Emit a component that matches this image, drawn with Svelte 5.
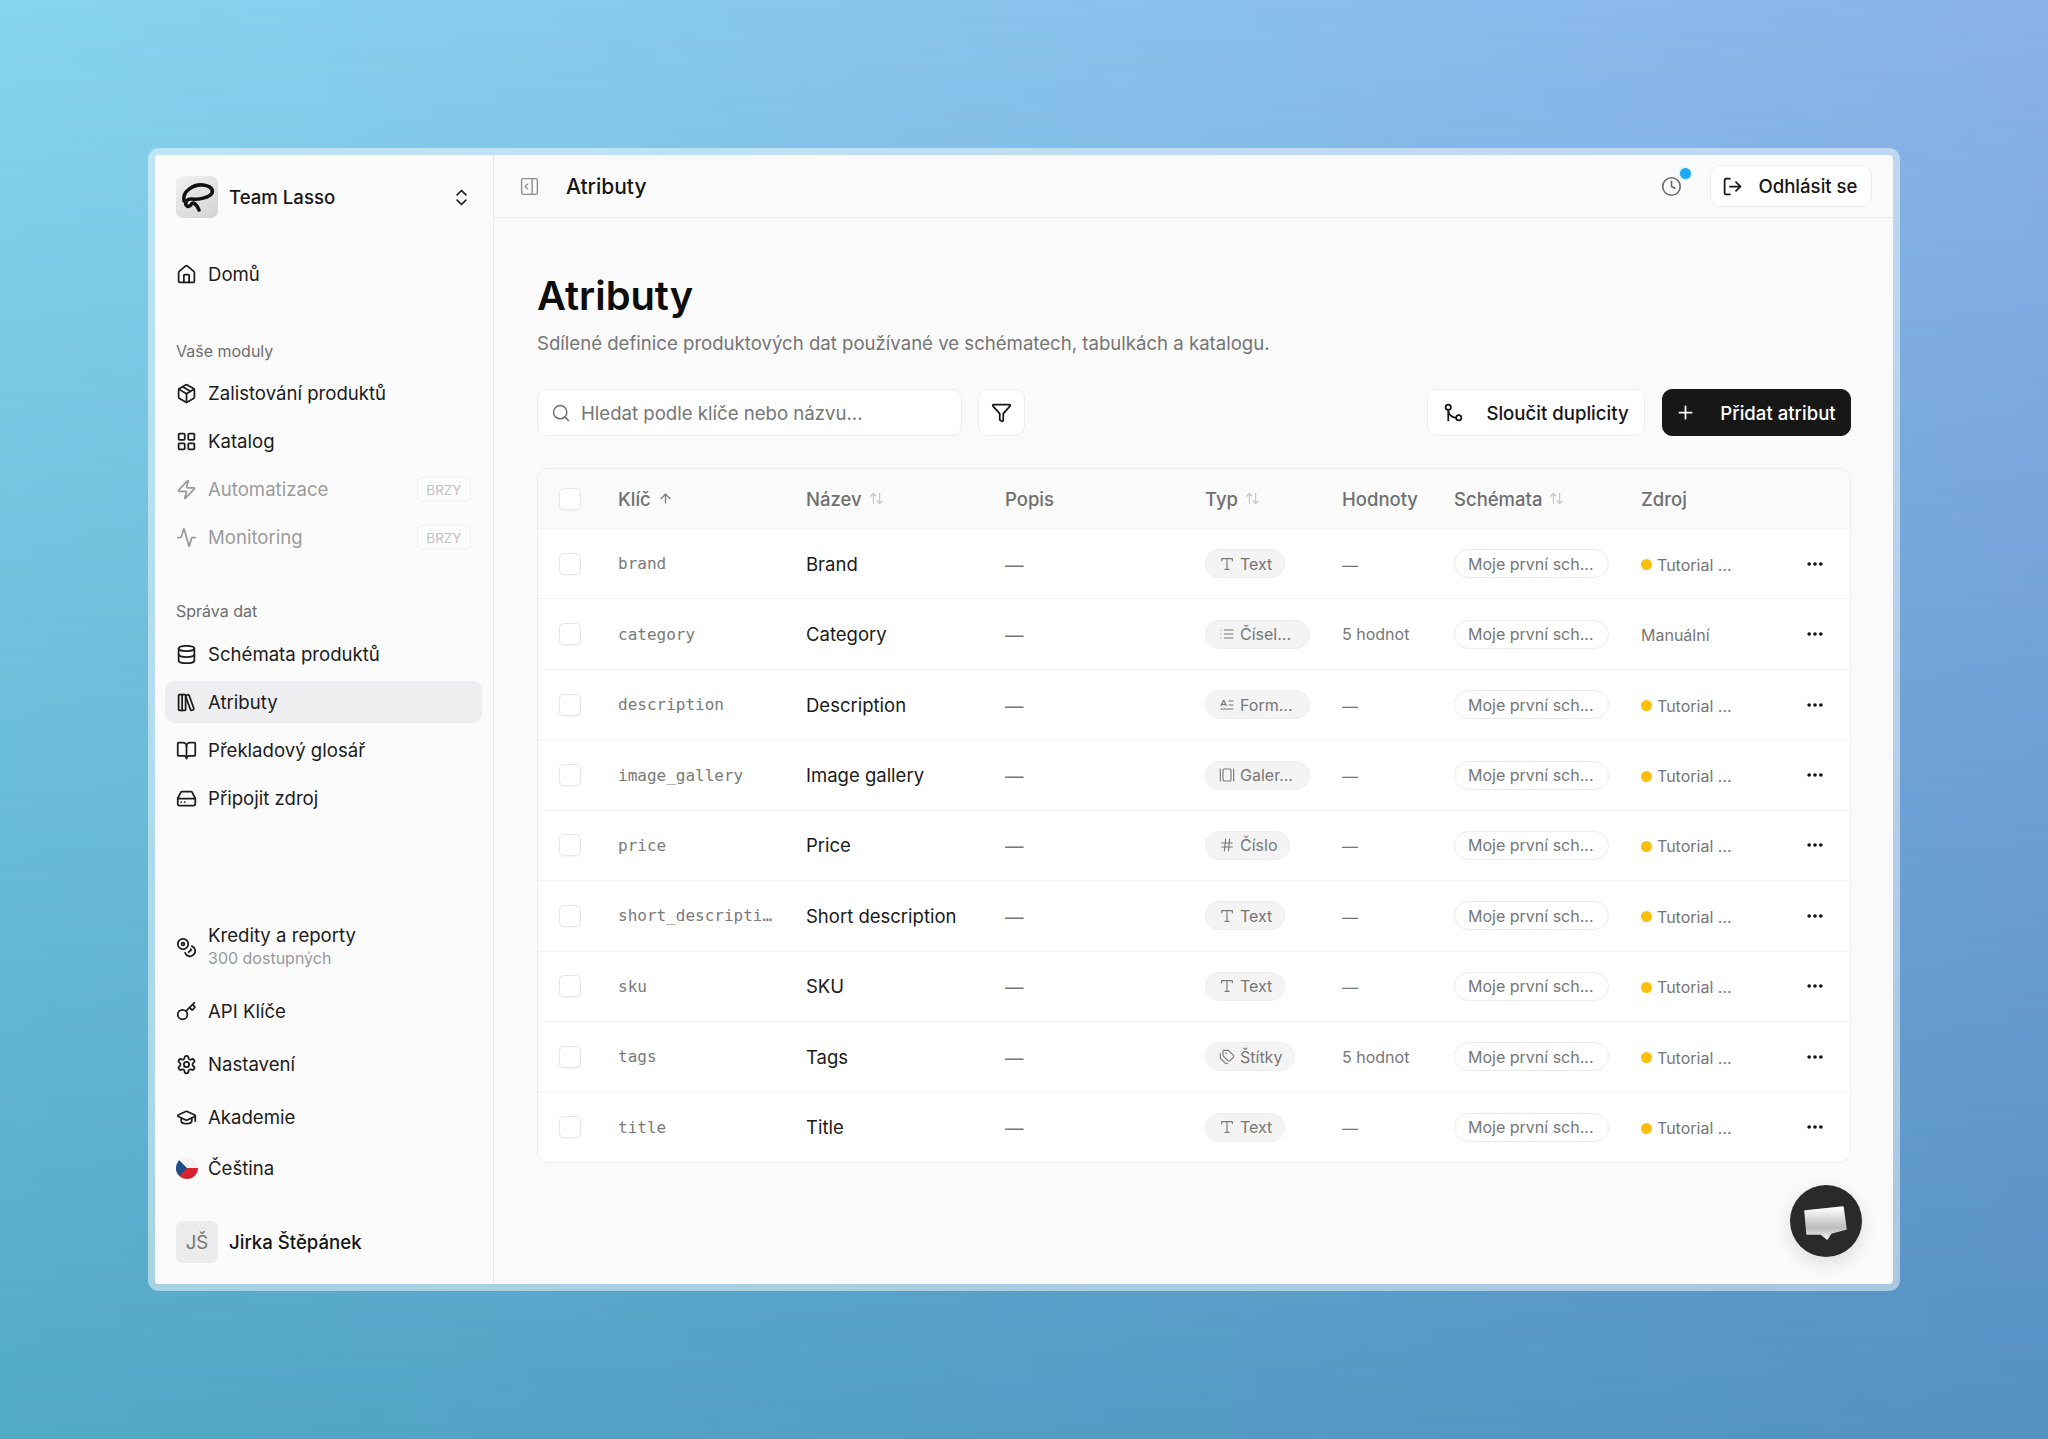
<script lang="ts">
	const icons: Record<string, string> = {
		home: '<path d="M15 21v-8a1 1 0 0 0-1-1h-4a1 1 0 0 0-1 1v8"/><path d="M3 10a2 2 0 0 1 .709-1.528l7-5.999a2 2 0 0 1 2.582 0l7 5.999A2 2 0 0 1 21 10v9a2 2 0 0 1-2 2H5a2 2 0 0 1-2-2z"/>',
		package: '<path d="M11 21.73a2 2 0 0 0 2 0l7-4A2 2 0 0 0 21 16V8a2 2 0 0 0-1-1.73l-7-4a2 2 0 0 0-2 0l-7 4A2 2 0 0 0 3 8v8a2 2 0 0 0 1 1.73z"/><path d="M12 22V12"/><path d="m3.3 7 7.703 4.734a2 2 0 0 0 1.994 0L20.7 7"/><path d="m7.5 4.27 9 5.15"/>',
		grid: '<rect x="3" y="3" width="7" height="7" rx="1"/><rect x="14" y="3" width="7" height="7" rx="1"/><rect x="14" y="14" width="7" height="7" rx="1"/><rect x="3" y="14" width="7" height="7" rx="1"/>',
		zap: '<path d="M4 14a1 1 0 0 1-.78-1.63l9.9-10.2a.5.5 0 0 1 .86.46l-1.92 6.02A1 1 0 0 0 13 10h7a1 1 0 0 1 .78 1.63l-9.9 10.2a.5.5 0 0 1-.86-.46l1.92-6.02A1 1 0 0 0 11 14z"/>',
		activity: '<path d="M22 12h-2.48a2 2 0 0 0-1.93 1.46l-2.35 8.36a.25.25 0 0 1-.48 0L9.24 2.18a.25.25 0 0 0-.48 0l-2.35 8.36A2 2 0 0 1 4.49 12H2"/>',
		database: '<ellipse cx="12" cy="5" rx="9" ry="3"/><path d="M3 5V19A9 3 0 0 0 21 19V5"/><path d="M3 12A9 3 0 0 0 21 12"/>',
		library: '<rect x="3" y="3" width="8" height="18" rx="1"/><path d="M7 3v18"/><path d="M20.4 18.9c.2.5-.1 1.100-.6 1.300l-1.900.7c-.5.2-1.100-.1-1.300-.6L11.100 5.100c-.2-.5.1-1.100.6-1.300l1.900-.7c.5-.2 1.100.1 1.300.6Z"/>',
		book: '<path d="M12 7v14"/><path d="M3 18a1 1 0 0 1-1-1V4a1 1 0 0 1 1-1h5a4 4 0 0 1 4 4 4 4 0 0 1 4-4h5a1 1 0 0 1 1 1v13a1 1 0 0 1-1 1h-6a3 3 0 0 0-3 3 3 3 0 0 0-3-3z"/>',
		drive: '<path d="M22 12H2"/><path d="M5.45 5.11 2 12v6a2 2 0 0 0 2 2h16a2 2 0 0 0 2-2v-6l-3.45-6.89A2 2 0 0 0 16.76 4H7.24a2 2 0 0 0-1.79 1.11z"/><path d="M6 16h.01"/><path d="M10 16h.01"/>',
		coins: '<circle cx="8" cy="8" r="6"/><circle cx="8" cy="8" r="1.6"/><path d="M18.09 10.37A6 6 0 1 1 10.34 18"/><path d="m16.71 13.88.7.71-2.82 2.82"/>',
		key: '<path d="m15.5 7.5 2.3 2.3a1 1 0 0 0 1.4 0l2.1-2.1a1 1 0 0 0 0-1.4L19 4"/><path d="m21 2-9.6 9.6"/><circle cx="7.5" cy="15.5" r="5.5"/>',
		settings: '<path d="M12.22 2h-.44a2 2 0 0 0-2 2v.18a2 2 0 0 1-1 1.73l-.43.25a2 2 0 0 1-2 0l-.15-.08a2 2 0 0 0-2.73.73l-.22.38a2 2 0 0 0 .73 2.73l.15.1a2 2 0 0 1 1 1.72v.51a2 2 0 0 1-1 1.74l-.15.09a2 2 0 0 0-.73 2.73l.22.38a2 2 0 0 0 2.73.73l.15-.08a2 2 0 0 1 2 0l.43.25a2 2 0 0 1 1 1.73V20a2 2 0 0 0 2 2h.44a2 2 0 0 0 2-2v-.18a2 2 0 0 1 1-1.73l.43-.25a2 2 0 0 1 2 0l.15.08a2 2 0 0 0 2.73-.73l.22-.39a2 2 0 0 0-.73-2.73l-.15-.08a2 2 0 0 1-1-1.74v-.5a2 2 0 0 1 1-1.74l.15-.09a2 2 0 0 0 .73-2.73l-.22-.38a2 2 0 0 0-2.73-.73l-.15.08a2 2 0 0 1-2 0l-.43-.25a2 2 0 0 1-1-1.73V4a2 2 0 0 0-2-2z"/><circle cx="12" cy="12" r="3"/>',
		cap: '<path d="M21.42 10.922a1 1 0 0 0-.019-1.838L12.83 5.18a2 2 0 0 0-1.66 0L2.6 9.08a1 1 0 0 0 0 1.832l8.57 3.908a2 2 0 0 0 1.66 0z"/><path d="M22 10v6"/><path d="M6 12.5V16a6 3 0 0 0 12 0v-3.5"/>',
		updown: '<path d="m7 15 5 5 5-5"/><path d="m7 9 5-5 5 5"/>',
		panel: '<rect x="3" y="3" width="18" height="18" rx="2"/><path d="M15 3v18"/><path d="m10 15-3-3 3-3"/>',
		clock: '<circle cx="12" cy="12" r="10"/><path d="M12 6v6l4 2"/>',
		logout: '<path d="M9 21H5a2 2 0 0 1-2-2V5a2 2 0 0 1 2-2h4"/><path d="m16 17 5-5-5-5"/><path d="M21 12H9"/>',
		search: '<path d="m21 21-4.34-4.34"/><circle cx="11" cy="11" r="8"/>',
		filter: '<path d="M10 20a1 1 0 0 0 .553.895l2 1A1 1 0 0 0 14 21v-7a2 2 0 0 1 .517-1.341L21.74 4.67A1 1 0 0 0 21 3H3a1 1 0 0 0-.742 1.67l7.225 7.989A2 2 0 0 1 10 14z"/>',
		merge: '<circle cx="18" cy="18" r="3"/><circle cx="6" cy="6" r="3"/><path d="M6 21V9a9 9 0 0 0 9 9"/>',
		plus: '<path d="M5 12h14"/><path d="M12 5v14"/>',
		up: '<path d="m5 12 7-7 7 7"/><path d="M12 19V5"/>',
		sort: '<path d="m21 16-4 4-4-4"/><path d="M17 20V4"/><path d="m3 8 4-4 4 4"/><path d="M7 4v16"/>',
		type: '<path d="M12 4v16"/><path d="M4 7V4h16v3"/><path d="M9 20h6"/>',
		list: '<path d="M3 12h.01"/><path d="M3 18h.01"/><path d="M3 6h.01"/><path d="M8 12h13"/><path d="M8 18h13"/><path d="M8 6h13"/>',
		form: '<path d="M15 12h6"/><path d="M15 6h6"/><path d="m3 13 3.553-7.724a.5.5 0 0 1 .894 0L11 13"/><path d="M3 18h18"/><path d="M3.92 11h6.16"/>',
		gallery: '<path d="M2 3v18"/><rect x="6" y="3" width="12" height="18" rx="2"/><path d="M22 3v18"/>',
		hash: '<path d="M4 9h16"/><path d="M4 15h16"/><path d="M10 3 8 21"/><path d="M16 3l-2 18"/>',
		tags: '<path d="M13.172 2a2 2 0 0 1 1.414.586l6.71 6.71a2.4 2.4 0 0 1 0 3.408l-4.592 4.592a2.4 2.4 0 0 1-3.408 0l-6.71-6.71A2 2 0 0 1 6 9.172V3a1 1 0 0 1 1-1z"/><path d="M2 7v6.172a2 2 0 0 0 .586 1.414l6.71 6.71a2.4 2.4 0 0 0 3.18.182"/><circle cx="10.5" cy="6.5" r=".5"/>'
	};

	const modules = [
		{ icon: 'package', label: 'Zalistování produktů' },
		{ icon: 'grid', label: 'Katalog' },
		{ icon: 'zap', label: 'Automatizace', soon: true },
		{ icon: 'activity', label: 'Monitoring', soon: true }
	];

	const dataItems = [
		{ icon: 'database', label: 'Schémata produktů' },
		{ icon: 'library', label: 'Atributy', active: true },
		{ icon: 'book', label: 'Překladový glosář' },
		{ icon: 'drive', label: 'Připojit zdroj' }
	];

	const columns = [
		{ label: 'Klíč', sort: 'up' },
		{ label: 'Název', sort: 'sort' },
		{ label: 'Popis' },
		{ label: 'Typ', sort: 'sort' },
		{ label: 'Hodnoty' },
		{ label: 'Schémata', sort: 'sort' },
		{ label: 'Zdroj' }
	];

	const rows = [
		{ key: 'brand', name: 'Brand', icon: 'type', type: 'Text', values: '—', source: 'Tutorial ...', dot: true },
		{ key: 'category', name: 'Category', icon: 'list', type: 'Čísel...', values: '5 hodnot', source: 'Manuální', dot: false },
		{ key: 'description', name: 'Description', icon: 'form', type: 'Form...', values: '—', source: 'Tutorial ...', dot: true },
		{ key: 'image_gallery', name: 'Image gallery', icon: 'gallery', type: 'Galer...', values: '—', source: 'Tutorial ...', dot: true },
		{ key: 'price', name: 'Price', icon: 'hash', type: 'Číslo', values: '—', source: 'Tutorial ...', dot: true },
		{ key: 'short_description', name: 'Short description', icon: 'type', type: 'Text', values: '—', source: 'Tutorial ...', dot: true },
		{ key: 'sku', name: 'SKU', icon: 'type', type: 'Text', values: '—', source: 'Tutorial ...', dot: true },
		{ key: 'tags', name: 'Tags', icon: 'tags', type: 'Štítky', values: '5 hodnot', source: 'Tutorial ...', dot: true },
		{ key: 'title', name: 'Title', icon: 'type', type: 'Text', values: '—', source: 'Tutorial ...', dot: true }
	];
</script>

{#snippet icon(name: string, size = 21, stroke = 2)}
	<svg
		class="icon"
		width={size}
		height={size}
		viewBox="0 0 24 24"
		fill="none"
		stroke="currentColor"
		stroke-width={stroke}
		stroke-linecap="round"
		stroke-linejoin="round">{@html icons[name]}</svg
	>
{/snippet}

{#snippet navItem(item: { icon: string; label: string; active?: boolean; soon?: boolean })}
	<div class="nav-item" class:active={item.active} class:disabled={item.soon}>
		{@render icon(item.icon)}
		<span>{item.label}</span>
		{#if item.soon}
			<span class="soon">BRZY</span>
		{/if}
	</div>
{/snippet}

<div class="page">
	<div class="frame">
		<div class="window">
			<aside class="sidebar">
				<div class="team">
					<div class="logo">
						<svg width="42" height="42" viewBox="0 0 42 42" fill="none" stroke="#111" stroke-width="3.600" stroke-linecap="round">
							<path d="M8 25C6 15 18 8 27 9c7 .8 10.500 4 9 8-2 4-12 7-20 6-5-.5-7 3-6 6 1 2 4 2 5.500-1 1.500-2 5.500 0 7.500 6" />
						</svg>
					</div>
					<span class="team-name">Team Lasso</span>
					<span class="team-chevron">{@render icon('updown', 21)}</span>
				</div>

				<div class="home">
					{@render navItem({ icon: 'home', label: 'Domů' })}
				</div>

				<div class="group first">
					<div class="group-label">Vaše moduly</div>
					{#each modules as item}
						{@render navItem(item)}
					{/each}
				</div>

				<div class="group">
					<div class="group-label">Správa dat</div>
					{#each dataItems as item}
						{@render navItem(item)}
					{/each}
				</div>

				<div class="bottom">
					<div class="nav-item credits">
						{@render icon('coins')}
						<div class="credits-text">
							<span>Kredity a reporty</span>
							<small>300 dostupných</small>
						</div>
					</div>
					{@render navItem({ icon: 'key', label: 'API Klíče' })}
					{@render navItem({ icon: 'settings', label: 'Nastavení' })}
					{@render navItem({ icon: 'cap', label: 'Akademie' })}
					<div class="nav-item lang">
						<svg class="icon" width="22" height="22" viewBox="0 0 22 22">
							<defs>
								<clipPath id="flag-clip"><circle cx="11" cy="11" r="11" /></clipPath>
							</defs>
							<g clip-path="url(#flag-clip)">
								<rect width="22" height="11" fill="#f4f4f4" />
								<rect y="11" width="22" height="11" fill="#d7232e" />
								<path d="M0 0 11 11 0 22z" fill="#1f4e8c" />
							</g>
						</svg>
						<span>Čeština</span>
					</div>
					<div class="user">
						<div class="avatar">JŠ</div>
						<span class="user-name">Jirka Štěpánek</span>
					</div>
				</div>
			</aside>

			<main class="main">
				<header class="topbar">
					<span class="panel-toggle">{@render icon('panel', 21, 1.6)}</span>
					<span class="topbar-title">Atributy</span>
					<div class="topbar-actions">
						<span class="history">
							{@render icon('clock', 21, 1.8)}
							<span class="history-dot"></span>
						</span>
						<button class="btn logout">
							{@render icon('logout', 21)}
							Odhlásit se
						</button>
					</div>
				</header>

				<div class="content">
					<h1>Atributy</h1>
					<p class="subtitle">Sdílené definice produktových dat používané ve schématech, tabulkách a katalogu.</p>

					<div class="toolbar">
						<div class="search">
							{@render icon('search', 20, 1.8)}
							<input type="text" placeholder="Hledat podle klíče nebo názvu..." />
						</div>
						<button class="btn filter">{@render icon('filter', 21)}</button>
						<button class="btn merge">
							{@render icon('merge', 21)}
							Sloučit duplicity
						</button>
						<button class="btn add">
							{@render icon('plus', 21)}
							Přidat atribut
						</button>
					</div>

					<div class="table">
						<div class="row head">
							<div class="cell"><span class="checkbox"></span></div>
							{#each columns as col}
								<div class="cell">
									{col.label}
									{#if col.sort}
										<span class="sort" class:current={col.sort === 'up'}>{@render icon(col.sort, 15, 2)}</span>
									{/if}
								</div>
							{/each}
							<div class="cell"></div>
						</div>
						{#each rows as row}
							<div class="row">
								<div class="cell"><span class="checkbox"></span></div>
								<div class="cell key"><span>{row.key}</span></div>
								<div class="cell name">{row.name}</div>
								<div class="cell muted dash">—</div>
								<div class="cell">
									<span class="tag" class:cut={row.type.endsWith('...')}>{@render icon(row.icon, 16, 1.7)}{row.type}</span>
								</div>
								<div class="cell small-muted" class:value-dash={row.values === '—'}>{row.values}</div>
								<div class="cell"><span class="schema">Moje první sch...</span></div>
								<div class="cell small-muted source">
									{#if row.dot}<span class="dot"></span>{/if}
									{row.source}
								</div>
								<div class="cell actions">
									<svg width="20" height="20" viewBox="0 0 24 24" fill="#111">
										<circle cx="5" cy="12" r="2.200" />
										<circle cx="12" cy="12" r="2.200" />
										<circle cx="19" cy="12" r="2.200" />
									</svg>
								</div>
							</div>
						{/each}
					</div>
				</div>

				<button class="chat" aria-label="Chat">
					<svg width="72" height="72" viewBox="0 0 72 72">
						<defs>
							<linearGradient id="bubble" x1="0" y1="0" x2="0" y2="1">
								<stop offset="0" stop-color="#ffffff" />
								<stop offset="0.65" stop-color="#bdbdbd" />
								<stop offset="1" stop-color="#f2f2f2" />
							</linearGradient>
						</defs>
						<path d="M15 26 53 22 56 44 41 48 37 54 31 49 17 49z" fill="url(#bubble)" stroke="url(#bubble)" stroke-width="1.500" stroke-linejoin="round" />
					</svg>
				</button>
			</main>
		</div>
	</div>
</div>

<style>
	:global(body) {
		margin: 0;
		font-family: Inter, 'Noto Sans', sans-serif;
		color: #1a1a1a;
	}

	.page {
		position: relative;
		box-sizing: border-box;
		height: 1439px;
		padding: 148px;
		background: linear-gradient(to right, #87d5ef, #8cb2ea);
	}

	.page::before {
		content: '';
		position: absolute;
		inset: 0;
		background: linear-gradient(to right, #52a9c6, #5590c2);
		-webkit-mask-image: linear-gradient(to bottom, transparent, #000);
		mask-image: linear-gradient(to bottom, transparent, #000);
	}

	.frame {
		position: relative;
		height: 100%;
		box-sizing: border-box;
		border: 7px solid rgba(255, 255, 255, 0.48);
		border-radius: 11px;
		background-clip: padding-box;
	}

	.window {
		display: flex;
		height: 100%;
		background: #fafafa;
		border-radius: 4px;
		overflow: hidden;
	}

	.icon {
		flex: none;
		display: block;
	}

	/* sidebar */
	.sidebar {
		display: flex;
		flex-direction: column;
		box-sizing: border-box;
		flex: none;
		width: 339px;
		padding: 21px 11px 21px 10px;
		background: #fbfbfb;
		border-right: 1px solid #e9e9e9;
		font-size: 18.6px;
	}

	.team {
		display: flex;
		align-items: center;
		gap: 11px;
		padding: 0 11px;
		height: 42px;
	}

	.logo {
		width: 42px;
		height: 42px;
		border-radius: 7px;
		background: linear-gradient(150deg, #f1f1f1, #d3d3d3);
	}

	.team-name,
	.user-name {
		font-weight: 500;
		color: #161616;
	}

	.team-chevron {
		margin-left: auto;
		margin-right: -1px;
		color: #222;
	}

	.home {
		margin-top: 35px;
	}

	.group {
		display: flex;
		flex-direction: column;
		gap: 6px;
		margin-top: 43px;
	}

	.group.first {
		margin-top: 46px;
	}

	.group-label {
		height: 20px;
		line-height: 20px;
		padding: 0 11px;
		margin-bottom: 6px;
		font-size: 16px;
		color: #6e6e6e;
	}

	.group.first .group-label {
		margin-bottom: 5px;
	}

	.nav-item {
		display: flex;
		align-items: center;
		gap: 11px;
		height: 42px;
		padding: 0 11px;
		border-radius: 9px;
		color: #1c1c1c;
	}

	.nav-item.active {
		background: #eeeef1;
	}

	.nav-item.disabled {
		color: #9b9b9b;
	}

	.soon {
		margin-left: auto;
		padding: 0 8.500px;
		height: 25px;
		line-height: 24px;
		box-sizing: border-box;
		font-size: 13.500px;
		color: #c3c3c3;
		border: 1px solid #f0f0f0;
		border-radius: 6px;
	}

	.bottom {
		display: flex;
		flex-direction: column;
		gap: 11px;
		margin-top: auto;
	}

	.nav-item.credits {
		height: 60px;
		margin-bottom: 2px;
	}

	.credits-text {
		display: flex;
		flex-direction: column;
		line-height: 23px;
	}

	.credits-text small {
		font-size: 16px;
		color: #999;
	}

	.nav-item.lang {
		gap: 10px;
		margin-top: -2px;
	}

	.user {
		display: flex;
		align-items: center;
		gap: 11px;
		margin-top: 21px;
		padding: 0 11px;
	}

	.avatar {
		display: grid;
		place-items: center;
		width: 42px;
		height: 42px;
		border-radius: 7px;
		background: #ebebeb;
		color: #757575;
	}

	/* main */
	.main {
		position: relative;
		flex: 1;
		min-width: 0;
	}

	.topbar {
		display: flex;
		align-items: center;
		box-sizing: border-box;
		height: 63px;
		padding: 0 21px 0 25px;
		border-bottom: 1px solid #e9e9e9;
	}

	.panel-toggle {
		color: #8f8f8f;
	}

	.topbar-title {
		margin-left: 26px;
		font-size: 21px;
		font-weight: 500;
		color: #161616;
	}

	.topbar-actions {
		display: flex;
		align-items: center;
		gap: 28px;
		margin-left: auto;
	}

	.history {
		position: relative;
		color: #6a6a6a;
	}

	.history-dot {
		position: absolute;
		top: -8px;
		right: -9px;
		width: 11px;
		height: 11px;
		border-radius: 50%;
		background: #1ea7f5;
		box-shadow: 0 0 0 2px #e4f3fd;
	}

	.btn {
		display: inline-flex;
		align-items: center;
		justify-content: center;
		box-sizing: border-box;
		height: 47px;
		padding: 0 6px;
		font-family: inherit;
		font-size: 18.6px;
		font-weight: 500;
		color: #161616;
		background: #fff;
		border: 1px solid #ececec;
		border-radius: 10px;
	}

	.logout {
		gap: 15px;
		width: 162px;
		height: 42px;
		padding-right: 8px;
	}

	.content {
		padding: 54px 42px 0 43px;
	}

	h1 {
		margin: 0;
		font-size: 39.800px;
		line-height: 48px;
		font-weight: 600;
		color: #0d0d0d;
	}

	.subtitle {
		margin: 10px 0 0;
		font-size: 18.6px;
		line-height: 26px;
		color: #757575;
	}

	.toolbar {
		display: flex;
		align-items: center;
		margin-top: 33px;
	}

	.search {
		display: flex;
		align-items: center;
		gap: 10px;
		box-sizing: border-box;
		width: 425px;
		height: 47px;
		padding: 0 13px;
		background: #fff;
		border: 1px solid #ececec;
		border-radius: 10px;
		color: #6f6f6f;
	}

	.search input {
		flex: 1;
		min-width: 0;
		border: 0;
		outline: 0;
		padding: 0;
		background: none;
		font-family: inherit;
		font-size: 18.6px;
	}

	.search input::placeholder {
		color: #767676;
		opacity: 1;
	}

	.filter {
		width: 47px;
		margin-left: 16px;
	}

	.merge {
		gap: 22px;
		width: 218px;
		margin-left: auto;
	}

	.add {
		gap: 24px;
		width: 189px;
		margin-left: 17px;
		padding-right: 8px;
		color: #fff;
		background: #171717;
		border-color: #171717;
	}

	/* table */
	.table {
		margin-top: 32px;
		background: #fff;
		border: 1px solid #ececec;
		border-radius: 12px;
		overflow: hidden;
	}

	.row {
		display: grid;
		grid-template-columns: 80px 188px 199px 200px 137px 112px 187px 150px 1fr;
		box-sizing: border-box;
		height: 70.440px;
		border-top: 1px solid #f3f3f3;
	}

	.row.head {
		height: 59px;
		border-top: 0;
		background: #fafafa;
		font-weight: 500;
		color: #707070;
	}

	.cell {
		display: flex;
		align-items: center;
		min-width: 0;
		font-size: 18.5px;
	}

	.checkbox {
		display: block;
		box-sizing: border-box;
		width: 22px;
		height: 22px;
		margin-left: 21px;
		background: #fff;
		border: 1.500px solid #e7e7e7;
		border-radius: 5px;
		box-shadow: 0 1px 2px rgba(0, 0, 0, 0.05);
	}

	.sort {
		margin-left: 7px;
		color: #c9c9c9;
	}

	.sort.current {
		color: #777;
	}

	.key {
		padding-right: 32px;
		font-family: 'DejaVu Sans Mono', monospace;
		font-size: 16px;
		color: #7a7a7a;
	}

	.key span {
		overflow: hidden;
		text-overflow: ellipsis;
		white-space: nowrap;
	}

	.name {
		color: #1a1a1a;
	}

	.muted {
		color: #777;
	}

	.small-muted {
		font-size: 16px;
		color: #777;
	}

	.dash,
	.value-dash {
		padding-top: 2px;
		box-sizing: border-box;
	}

	.tag {
		display: inline-flex;
		align-items: center;
		gap: 5px;
		box-sizing: border-box;
		height: 29px;
		padding: 0 12px 0 13px;
		font-size: 16px;
		color: #777;
		background: #f4f4f4;
		border: 1px solid #ededed;
		border-radius: 15px;
		white-space: nowrap;
	}

	.tag.cut {
		width: 105px;
	}

	.schema {
		display: inline-flex;
		align-items: center;
		box-sizing: border-box;
		height: 29px;
		width: 155px;
		padding-left: 13px;
		font-size: 16px;
		color: #777;
		background: #fff;
		border: 1px solid #ebebeb;
		border-radius: 15px;
		white-space: nowrap;
	}

	.source {
		gap: 5px;
		padding-top: 2px;
		box-sizing: border-box;
	}

	.dot {
		width: 11px;
		height: 11px;
		border-radius: 50%;
		background: #fbbf0b;
	}

	.actions {
		padding-left: 14px;
	}

	.chat {
		position: absolute;
		right: 31px;
		bottom: 27px;
		width: 72px;
		height: 72px;
		padding: 0;
		border: 0;
		border-radius: 50%;
		background: #2a2a2a;
		box-shadow: 0 6px 18px rgba(0, 0, 0, 0.12);
	}

	.chat svg {
		display: block;
	}
</style>
